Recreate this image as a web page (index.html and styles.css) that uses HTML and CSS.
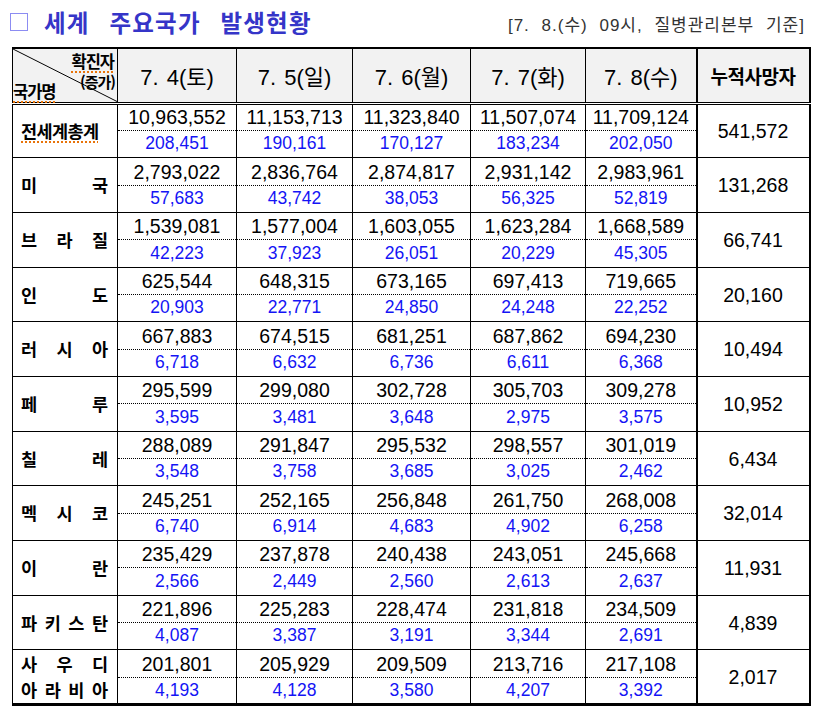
FILE: index.html
```html
<!DOCTYPE html>
<html lang="ko">
<head>
<meta charset="utf-8">
<link rel="stylesheet" href="styles.css">
</head>
<body>
<div class="page">
  <div class="titlebar">
    <h1 class="title"><span class="box"></span><span>세계 주요국가 발생현황</span></h1>
    <div class="source">[7. 8.(수) 09시, 질병관리본부 기준]</div>
  </div>
  <table class="grid">
    <colgroup>
      <col class="c-name"><col class="c-d1"><col class="c-d2"><col class="c-d3"><col class="c-d4"><col class="c-d5"><col class="c-tot">
    </colgroup>
    <thead>
      <tr class="head">
        <th class="corner">
          <svg class="diag" viewBox="0 0 100 100" preserveAspectRatio="none"><line x1="0" y1="0" x2="100" y2="100" stroke="#000" stroke-width="1" vector-effect="non-scaling-stroke"/></svg>
          <span class="c-top"><span class="sp">확진자</span></span>
          <span class="c-mid">(증가)</span>
          <span class="c-bot"><span class="sp">국가명</span></span>
        </th>
        <th>7. 4(토)</th>
        <th>7. 5(일)</th>
        <th>7. 6(월)</th>
        <th>7. 7(화)</th>
        <th>7. 8(수)</th>
        <th class="tot-h">누적사망자</th>
      </tr>
    </thead>
    <tbody>
      <tr class="up"><td class="name" rowspan="2"><span class="sp jn">전세계총계</span></td><td>10,963,552</td><td>11,153,713</td><td>11,323,840</td><td>11,507,074</td><td>11,709,124</td><td class="tot" rowspan="2">541,572</td></tr>
      <tr class="dn"><td>208,451</td><td>190,161</td><td>170,127</td><td>183,234</td><td>202,050</td></tr>

      <tr class="up"><td class="name" rowspan="2"><span class="jn">미 국</span></td><td>2,793,022</td><td>2,836,764</td><td>2,874,817</td><td>2,931,142</td><td>2,983,961</td><td class="tot" rowspan="2">131,268</td></tr>
      <tr class="dn"><td>57,683</td><td>43,742</td><td>38,053</td><td>56,325</td><td>52,819</td></tr>

      <tr class="up"><td class="name" rowspan="2"><span class="jn">브 라 질</span></td><td>1,539,081</td><td>1,577,004</td><td>1,603,055</td><td>1,623,284</td><td>1,668,589</td><td class="tot" rowspan="2">66,741</td></tr>
      <tr class="dn"><td>42,223</td><td>37,923</td><td>26,051</td><td>20,229</td><td>45,305</td></tr>

      <tr class="up"><td class="name" rowspan="2"><span class="jn">인 도</span></td><td>625,544</td><td>648,315</td><td>673,165</td><td>697,413</td><td>719,665</td><td class="tot" rowspan="2">20,160</td></tr>
      <tr class="dn"><td>20,903</td><td>22,771</td><td>24,850</td><td>24,248</td><td>22,252</td></tr>

      <tr class="up"><td class="name" rowspan="2"><span class="jn">러 시 아</span></td><td>667,883</td><td>674,515</td><td>681,251</td><td>687,862</td><td>694,230</td><td class="tot" rowspan="2">10,494</td></tr>
      <tr class="dn"><td>6,718</td><td>6,632</td><td>6,736</td><td>6,611</td><td>6,368</td></tr>

      <tr class="up"><td class="name" rowspan="2"><span class="jn">페 루</span></td><td>295,599</td><td>299,080</td><td>302,728</td><td>305,703</td><td>309,278</td><td class="tot" rowspan="2">10,952</td></tr>
      <tr class="dn"><td>3,595</td><td>3,481</td><td>3,648</td><td>2,975</td><td>3,575</td></tr>

      <tr class="up"><td class="name" rowspan="2"><span class="jn">칠 레</span></td><td>288,089</td><td>291,847</td><td>295,532</td><td>298,557</td><td>301,019</td><td class="tot" rowspan="2">6,434</td></tr>
      <tr class="dn"><td>3,548</td><td>3,758</td><td>3,685</td><td>3,025</td><td>2,462</td></tr>

      <tr class="up"><td class="name" rowspan="2"><span class="jn">멕 시 코</span></td><td>245,251</td><td>252,165</td><td>256,848</td><td>261,750</td><td>268,008</td><td class="tot" rowspan="2">32,014</td></tr>
      <tr class="dn"><td>6,740</td><td>6,914</td><td>4,683</td><td>4,902</td><td>6,258</td></tr>

      <tr class="up"><td class="name" rowspan="2"><span class="jn">이 란</span></td><td>235,429</td><td>237,878</td><td>240,438</td><td>243,051</td><td>245,668</td><td class="tot" rowspan="2">11,931</td></tr>
      <tr class="dn"><td>2,566</td><td>2,449</td><td>2,560</td><td>2,613</td><td>2,637</td></tr>

      <tr class="up"><td class="name" rowspan="2"><span class="jn">파 키 스 탄</span></td><td>221,896</td><td>225,283</td><td>228,474</td><td>231,818</td><td>234,509</td><td class="tot" rowspan="2">4,839</td></tr>
      <tr class="dn"><td>4,087</td><td>3,387</td><td>3,191</td><td>3,344</td><td>2,691</td></tr>

      <tr class="up"><td class="name two" rowspan="2"><span class="jn">사 우 디</span><span class="jn">아 라 비 아</span></td><td>201,801</td><td>205,929</td><td>209,509</td><td>213,716</td><td>217,108</td><td class="tot" rowspan="2">2,017</td></tr>
      <tr class="dn"><td>4,193</td><td>4,128</td><td>3,580</td><td>4,207</td><td>3,392</td></tr>
    </tbody>
  </table>
</div>
</body>
</html>
```

FILE: styles.css
```css
* { box-sizing: border-box; }
html, body { margin: 0; padding: 0; background: #fff; }
body { font-family: "Liberation Sans", "Noto Sans CJK KR", sans-serif; color: #000; }
.page { width: 820px; padding: 8px 12px 0 10px; }

.titlebar { display: flex; justify-content: space-between; align-items: center; height: 28px; margin-bottom: 11px; }
.title { margin: 0; display: flex; align-items: center; gap: 16px; font-family: "Noto Sans CJK KR", sans-serif; font-weight: 700; font-size: 23.5px; color: #3535c8; letter-spacing: 1.2px; word-spacing: 12px; }
.box { display: inline-block; width: 18px; height: 18px; border: 1.5px solid #8c8cf2; }
.source { font-family: "Liberation Sans", "Noto Sans CJK KR", sans-serif; font-size: 17px; color: #333; letter-spacing: 1px; word-spacing: 6px; padding-top: 3px; margin-right: 3px; }

.grid { border-collapse: collapse; table-layout: fixed; width: 797px; margin-left: 2px; border-top: 2px solid #000; border-left: 1px solid #000; border-right: 2px solid #000; border-bottom: 3px solid #000; }
.c-name { width: 105px; }
.c-d1 { width: 119px; }
.c-d2 { width: 116px; }
.c-d3 { width: 118px; }
.c-d4 { width: 115px; }
.c-d5 { width: 111px; }
.c-tot { width: 113px; }

.grid th, .grid td { border: 1px solid #000; padding: 0; text-align: center; vertical-align: middle; }
.head th { height: 55px; background: #f2f2f2; font-weight: 400; font-size: 22px; border-bottom: 3px double #000; word-spacing: 2px; }
.head th.tot-h { font-family: "Noto Sans CJK KR", sans-serif; font-weight: 700; font-size: 19px; letter-spacing: -0.5px; }
.grid .tot-h, .grid .tot { border-left: 2px solid #000; }

.corner { position: relative; padding: 0; }
.diag { position: absolute; left: 0; top: 0; width: 100%; height: 100%; }
.corner .c-top, .corner .c-mid, .corner .c-bot { position: absolute; font-family: "Noto Sans CJK KR", sans-serif; line-height: 1; letter-spacing: -1px; }
.c-top { right: 3px; top: 4px; font-size: 16.5px; font-weight: 700; }
.c-mid { right: 2px; top: 25px; font-size: 15px; font-weight: 700; }
.c-bot { left: 0; bottom: 2px; font-size: 16.5px; font-weight: 700; }
.sp { text-decoration: underline dotted #e8740a; text-decoration-thickness: 1.5px; text-underline-offset: 3px; }

.up td, .dn td { height: 27.35px; }
.up td { font-size: 19.5px; line-height: 1; padding-top: 2px; border-bottom: 1px dotted #000; }
.dn td { font-size: 17.5px; line-height: 1; color: #1414f5; border-top: 1px dotted #000; }
.up td.name, .up td.tot { border-bottom: 1px solid #000; }
.grid td.tot { color: #000; font-size: 19.5px; }

.grid td.name { text-align: left; padding: 0 9px 0 8px; font-family: "Noto Sans CJK KR", sans-serif; font-weight: 700; font-size: 17.5px; line-height: 1.35; }
.jn { display: block; text-align: justify; text-align-last: justify; }
.jn.sp { display: inline-block; width: 100%; letter-spacing: -0.6px; text-align: left; text-align-last: left; }
.name.two .jn { line-height: 1.45; }
```
